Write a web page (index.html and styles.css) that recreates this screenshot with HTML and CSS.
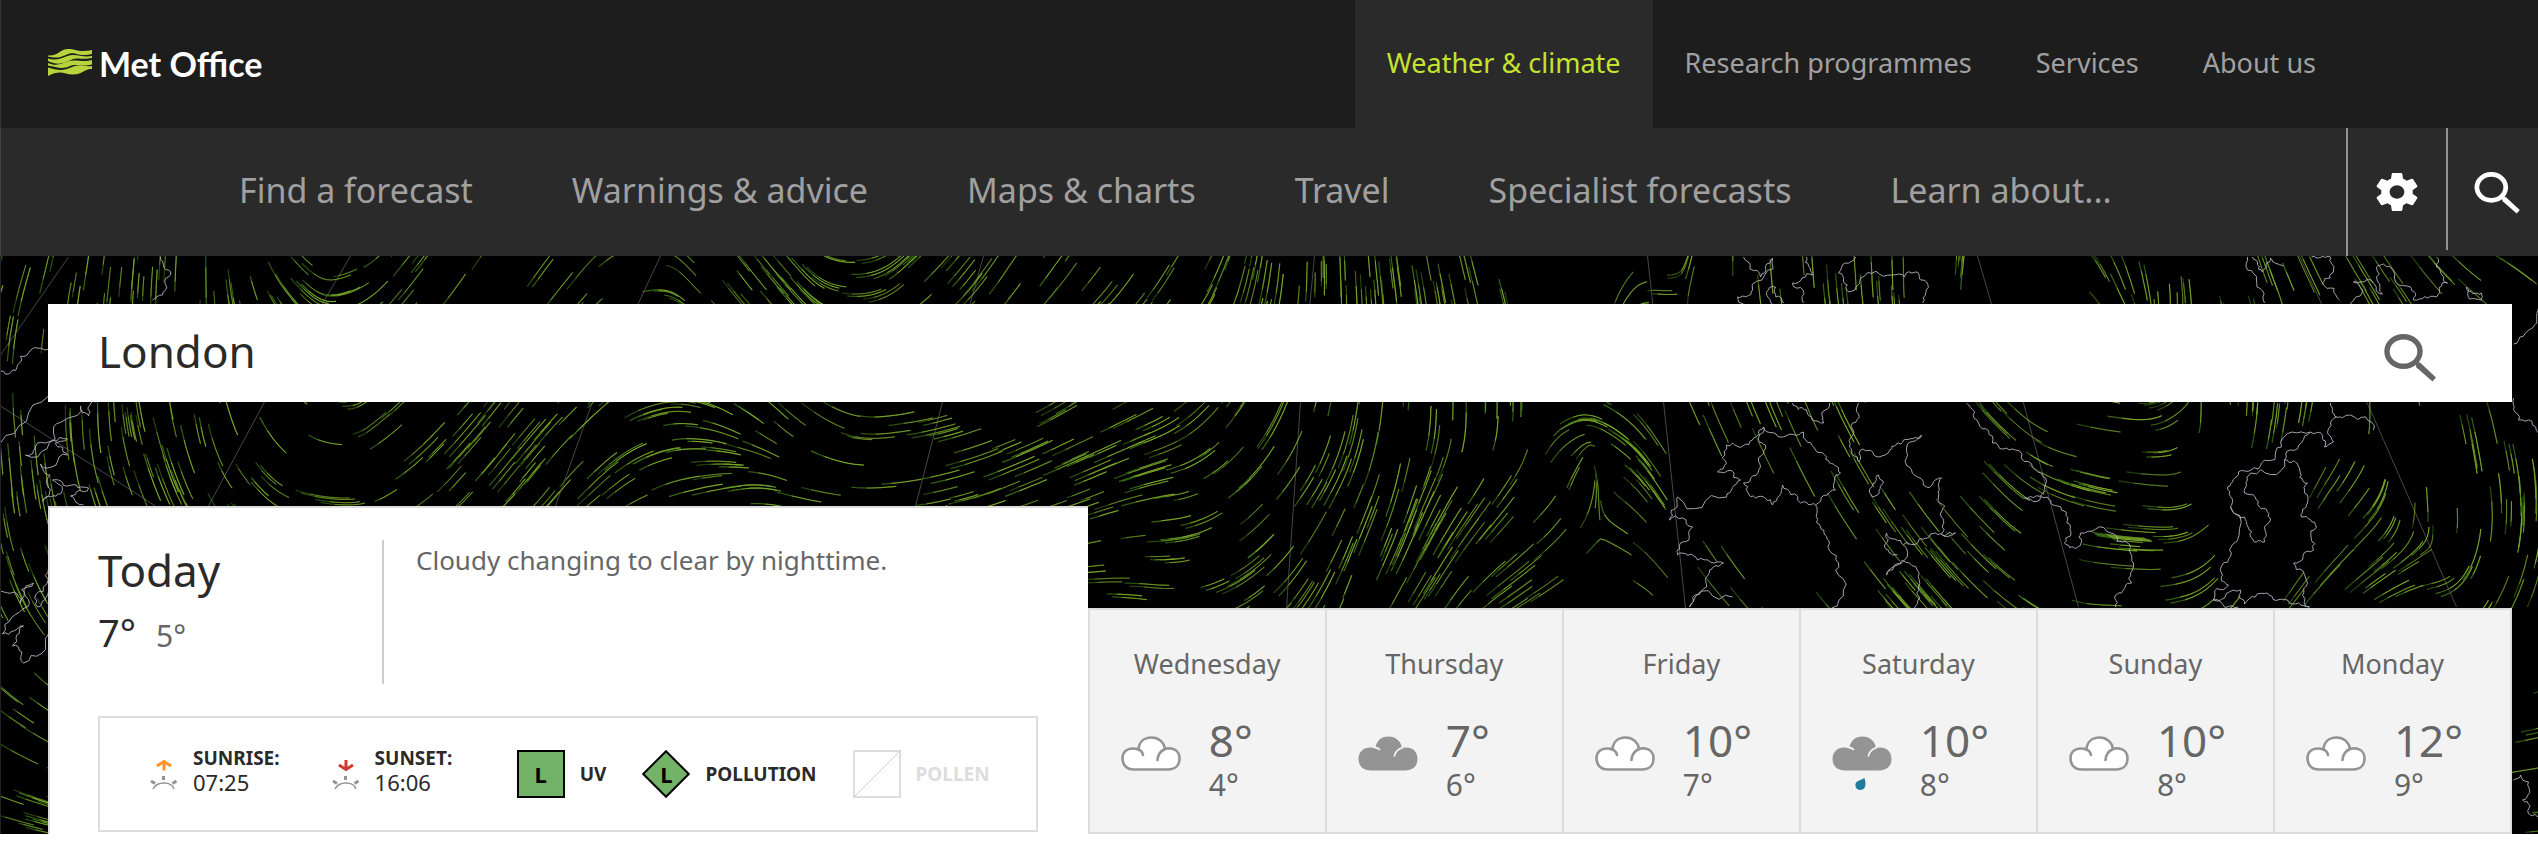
FILE: index.html
```html
<!DOCTYPE html>
<html lang="en">
<head>
<meta charset="utf-8">
<title>London weather - Met Office</title>
<link rel="stylesheet" href="styles.css">
</head>
<body>
<svg class="defs" aria-hidden="true">
  <symbol id="search" viewBox="0 0 52 48">
    <ellipse cx="19.500" cy="17.500" rx="16.500" ry="14.800" fill="none" stroke="currentColor" stroke-width="5.400"/>
    <path d="M31.500 30.500 33.500 28 36 28.500 52 43.500 48.500 47.500 32.500 33.500Z" fill="currentColor"/>
  </symbol>
  <symbol id="cloud" viewBox="0 0 60 56">
    <path d="M13 33.500C5 33.500 1.500 28 1.500 22.500 1.500 16 6 12.500 12 12.500Q15 12.500 17.500 13.500C18 6 23 1.500 30.500 1.500 37.500 1.500 43 6 44 13Q46 12.300 48 12.300C55 12.500 58.500 17 58.500 22.500 58.500 29 54.500 33.500 47 33.500Z" fill="#fff" stroke="#949494" stroke-width="2.600"/>
    <path d="M17 13.500Q21 14.500 22 19M44 13Q37 16 36.500 24" fill="none" stroke="#949494" stroke-width="2.600" stroke-linecap="round"/>
  </symbol>
  <symbol id="overcast" viewBox="0 0 60 56">
    <path d="M13 34.500C4 34.500 .5 28.500 .5 23 .5 16 5.500 11.500 12 11.500Q15 11.500 17.500 12.500C18 5 23 .5 30.500 .5 37.500 .5 43 5 44 12Q46 11.500 48 11.500C56 11.500 59.500 17 59.500 23 59.500 29.500 55.500 34.500 47 34.500Z" fill="#949494"/>
    <path d="M17 11.500Q20.500 12 22 14M45 11.300Q37 14 36.300 20.500" fill="none" stroke="#f3f3f3" stroke-width="1.800"/>
  </symbol>
  <symbol id="rain" viewBox="0 0 60 56">
    <use href="#overcast"/>
    <path d="M32.500 42Q34 47 33.300 50C32.500 53 30 54 28 54 24.500 53.500 23 51 23.500 48 24.500 44.500 28.500 44.500 32.500 42Z" fill="#1f7a9c"/>
  </symbol>
  <symbol id="sun" viewBox="0 0 32 32">
    <path d="M5 31Q8 25 16 25T26 31" fill="none" stroke="#949494" stroke-width="1.500"/>
    <path d="M15.500 18V22M3 23 7 25.500M28.500 23 24.500 25.500" stroke="#949494" stroke-width="3"/>
  </symbol>
</svg>

<header class="top">
  <a class="logo" href="#">
    <svg class="logo-mark" viewBox="0 0 44 28" aria-hidden="true">
      <path d="M0 6.500C11 7 12 0 20 0 29 0 30 4 44 1V5C31 8 28 3 22 4.500 15 6.500 11 10.500 0 7.500Z"/>
      <path d="M0 9.500C13 13 16 6 25 6 32 6 36 8.500 44 7V9C34 11 30 8 24 10.500 17 13.500 11 17.500 0 12Z"/>
      <path d="M0 14C11 19 17 11.500 25 11.500 33 11.500 37 13 44 11V15.500C33 18.500 28 14 21 17.500 14 20.500 8 18 0 16.500Z"/>
      <path d="M0 18.500C9 21.500 16 22 23 18.500 31 14.500 35 18 44 17V20C37 19 35 25.500 25 25.500 16 25.500 13 20 0 27Z"/>
    </svg>
    <span class="logo-text">Met Office</span>
  </a>
  <nav class="sections">
    <a class="section active" href="#">Weather &amp; climate</a>
    <a class="section" href="#">Research programmes</a>
    <a class="section" href="#">Services</a>
    <a class="section" href="#">About us</a>
  </nav>
</header>

<div class="bar">
  <nav class="menu">
    <a href="#">Find a forecast</a>
    <a href="#">Warnings &amp; advice</a>
    <a href="#">Maps &amp; charts</a>
    <a href="#">Travel</a>
    <a href="#">Specialist forecasts</a>
    <a href="#">Learn about...</a>
  </nav>
  <button class="tool" type="button" aria-label="Settings">
    <svg class="gear" viewBox="2 2 20 20" preserveAspectRatio="none" aria-hidden="true"><path fill="#fff" d="M19.430 12.980c.04-.32.070-.64.070-.98s-.03-.66-.07-.98l2.110-1.650c.19-.15.24-.42.120-.64l-2-3.460c-.12-.22-.39-.3-.61-.22l-2.490 1c-.52-.4-1.080-.73-1.690-.98l-.38-2.650C14.460 2.180 14.250 2 14 2h-4c-.25 0-.46.180-.49.420l-.38 2.650c-.61.250-1.170.590-1.690.98l-2.490-1c-.23-.09-.49 0-.61.220l-2 3.460c-.13.220-.07.490.120.640l2.110 1.650c-.04.320-.07.650-.07.980s.030.660.070.980l-2.110 1.650c-.19.150-.24.420-.12.640l2 3.460c.12.220.390.300.610.220l2.490-1c.52.400 1.080.730 1.690.980l.38 2.650c.03.240.240.420.490.420h4c.25 0 .46-.18.490-.42l.38-2.650c.61-.25 1.170-.59 1.690-.98l2.490 1c.23.090.490 0 .61-.22l2-3.460c.12-.22.070-.49-.12-.64l-2.110-1.650zM12 15.500c-1.930 0-3.500-1.570-3.500-3.500s1.570-3.500 3.500-3.500 3.500 1.570 3.500 3.500-1.570 3.500-3.500 3.500z"/></svg>
  </button>
  <button class="tool short" type="button" aria-label="Search the site">
    <svg class="glass" aria-hidden="true"><use href="#search"/></svg>
  </button>
</div>

<main class="hero">
  <svg class="wind" id="wind" viewBox="0 256 2538 578" preserveAspectRatio="xMidYMin slice" aria-hidden="true"></svg>

  <form class="search">
    <input class="search-input" type="text" value="London" aria-label="Location">
    <button class="search-button" type="button" aria-label="Search"><svg class="glass large" aria-hidden="true"><use href="#search"/></svg></button>
  </form>

  <div class="forecast">
    <section class="today">
      <div class="today-head">
        <div class="today-temps">
          <h1>Today</h1>
          <p class="now"><span class="now-high">7°</span><span class="now-low">5°</span></p>
        </div>
        <p class="summary">Cloudy changing to clear by nighttime.</p>
      </div>
      <div class="facts">
        <div class="group sun-group">
          <div class="fact sun-fact">
            <svg class="sun" viewBox="0 0 32 32" aria-hidden="true"><use href="#sun"/><path d="M16 12.500V3M9 8 16 3.500 23 8" fill="none" stroke="#ff9326" stroke-width="3"/></svg>
            <div class="fact-text"><strong>SUNRISE:</strong><span>07:25</span></div>
          </div>
          <div class="fact sun-fact">
            <svg class="sun" viewBox="0 0 32 32" aria-hidden="true"><use href="#sun"/><path d="M16 2V11.500M9 7 16 11.500 23 7" fill="none" stroke="#cf3a33" stroke-width="3"/></svg>
            <div class="fact-text"><strong>SUNSET:</strong><span>16:06</span></div>
          </div>
        </div>
        <div class="group">
          <div class="fact"><span class="badge square">L</span><strong>UV</strong></div>
          <div class="fact"><span class="badge"><svg class="diamond" viewBox="0 0 48 48" aria-hidden="true"><path d="M24 1.200 46.800 24 24 46.800 1.200 24Z" fill="#73b368" stroke="#000" stroke-width="2"/></svg><span class="badge-letter">L</span></span><strong>POLLUTION</strong></div>
          <div class="fact off"><svg class="empty" viewBox="0 0 48 48" aria-hidden="true"><path d="M1 1H47V47H1Z" fill="none" stroke="#ddd" stroke-width="2"/><path d="M0 48 48 0" stroke="#ccc"/></svg><strong>POLLEN</strong></div>
        </div>
      </div>
    </section>

    <section class="days">
      <a class="day" href="#"><h2>Wednesday</h2><div class="day-row"><svg class="weather" aria-hidden="true"><use href="#cloud"/></svg><div><p class="high">8°</p><p class="low">4°</p></div></div></a>
      <a class="day" href="#"><h2>Thursday</h2><div class="day-row"><svg class="weather" aria-hidden="true"><use href="#overcast"/></svg><div><p class="high">7°</p><p class="low">6°</p></div></div></a>
      <a class="day" href="#"><h2>Friday</h2><div class="day-row"><svg class="weather" aria-hidden="true"><use href="#cloud"/></svg><div><p class="high">10°</p><p class="low">7°</p></div></div></a>
      <a class="day" href="#"><h2>Saturday</h2><div class="day-row"><svg class="weather" aria-hidden="true"><use href="#rain"/></svg><div><p class="high">10°</p><p class="low">8°</p></div></div></a>
      <a class="day" href="#"><h2>Sunday</h2><div class="day-row"><svg class="weather" aria-hidden="true"><use href="#cloud"/></svg><div><p class="high">10°</p><p class="low">8°</p></div></div></a>
      <a class="day" href="#"><h2>Monday</h2><div class="day-row"><svg class="weather" aria-hidden="true"><use href="#cloud"/></svg><div><p class="high">12°</p><p class="low">9°</p></div></div></a>
    </section>
  </div>
</main>
<script src="wind.js"></script>
</body>
</html>
```
FILE: styles.css
```css
* { box-sizing: border-box; }
body {
  margin: 0;
  background: #fff;
  color: #2a2a2a;
  font-family: "Noto Sans", "Open Sans", sans-serif;
  font-size: 27px;
}
h1, h2, p { margin: 0; font-weight: 400; }
a { color: inherit; text-decoration: none; }
button { border: 0; padding: 0; background: none; color: inherit; }
svg { display: block; flex: none; }
.defs { display: none; }

.top {
  display: flex;
  justify-content: space-between;
  height: 128px;
  padding: 0 190px 0 47px;
  background: #1d1d1d;
  border-left: 1px solid #333;
}
.logo { display: flex; align-items: center; gap: 7px; height: 126px; }
.logo-mark { width: 44px; height: 28px; fill: #b9d33c; }
.logo-text { color: #fff; font-family: Lato, "Open Sans", sans-serif; font-size: 34px; font-weight: 700; }
.sections { display: flex; color: #a0a0a0; }
.section { display: flex; align-items: center; padding: 0 32px 4px; }
.active { background: #2a2a2a; color: #c4e230; }

.bar {
  display: flex;
  height: 128px;
  background: #2a2a2a;
  border-left: 1px solid #444;
  color: #a0a0a0;
}
.menu { flex: 1; display: flex; align-items: center; gap: 99px; padding: 0 0 4px 238px; font-size: 34px; white-space: nowrap; }
.tool {
  display: flex;
  align-items: center;
  justify-content: center;
  width: 100px;
  height: 128px;
  border-left: 2px solid #949494;
  color: #fff;
}
.short { width: 92px; height: 122px; justify-content: flex-start; padding: 8px 0 0 26px; }
.gear { width: 42px; height: 38px; }
.glass { width: 46px; height: 42px; }
.large { width: 52px; height: 48px; }

.hero {
  position: relative;
  padding: 48px 26px 0 47px;
  border-left: 1px solid #222;
  background: #000;
}
.wind { position: absolute; inset: 0; width: 100%; height: 100%; }
.search {
  position: relative;
  display: flex;
  align-items: center;
  height: 98px;
  padding: 0 76px 0 50px;
  background: #fff;
}
.search-input {
  flex: 1;
  min-width: 0;
  padding: 0 0 4px;
  border: 0;
  outline: 0;
  background: none;
  color: #2a2a2a;
  font: inherit;
  font-size: 44px;
}
.search-button { color: #666; padding-top: 10px; }

.forecast {
  position: relative;
  display: grid;
  grid-template-columns: 73fr 100fr;
  align-items: end;
  margin-top: 104px;
}
.today {
  padding: 32px 50px 2px 48px;
  background: #fff;
  border: solid #ddd;
  border-width: 2px 0 0 2px;
}
.today-head { display: flex; min-height: 144px; margin-bottom: 32px; }
.today-temps { width: 286px; border-right: 2px solid #ccc; }
.today-temps h1 { font-size: 44px; line-height: 60px; }
.now { display: flex; align-items: baseline; gap: 20px; line-height: 64px; }
.now-high { font-size: 38px; }
.now-low { font-size: 30px; color: #666; }
.summary { padding-left: 32px; font-size: 26px; line-height: 40px; color: #666; }
.facts {
  display: flex;
  justify-content: space-between;
  padding: 28px 46px 28px 48px;
  border: 2px solid #ddd;
  font-size: 19px;
}
.group { display: flex; align-items: center; gap: 36px; }
.sun-group { gap: 50px; }
.fact { display: flex; align-items: center; gap: 15px; }
.sun-fact { gap: 13px; }
.fact-text { display: flex; flex-direction: column; padding-bottom: 8px; line-height: 24px; }
.fact-text span { font-size: 22px; }
.sun { width: 32px; height: 32px; }
.badge {
  position: relative;
  display: flex;
  align-items: center;
  justify-content: center;
  width: 48px;
  height: 48px;
  color: #000;
  font-size: 22px;
  font-weight: 700;
}
.square { background: #73b368; border: 2px solid #000; }
.diamond { position: absolute; inset: 0; width: 48px; height: 48px; }
.badge-letter { position: relative; }
.empty { width: 48px; height: 48px; }
.off { color: #ddd; }

.days {
  display: grid;
  grid-template-columns: repeat(6, 1fr);
  background: #f3f3f3;
  border: solid #ddd;
  border-width: 2px 0 2px 2px;
  color: #666;
}
.day { padding: 34px 0 28px; border-right: 2px solid #ddd; }
.day h2 { margin-bottom: 30px; font-size: 27px; line-height: 40px; text-align: center; }
.day-row { display: flex; gap: 28px; padding-left: 31px; }
.weather { width: 60px; height: 56px; margin-top: 22px; }
.high { font-size: 44px; line-height: 52px; }
.low { font-size: 30px; line-height: 38px; }
```
FILE: wind.js
```js
// Draws the wind map behind the forecast: map grid, coastlines and wind streaks.
(function () {
  var svg = document.getElementById('wind');
  var NS = 'http://www.w3.org/2000/svg';
  var seed = 7;
  function rand() { seed = (seed * 16807) % 2147483647; return seed / 2147483647; }
  function path(d, stroke, width, opacity) {
    var p = document.createElementNS(NS, 'path');
    p.setAttribute('d', d);
    p.setAttribute('fill', 'none');
    p.setAttribute('stroke', stroke);
    p.setAttribute('stroke-width', width);
    p.setAttribute('opacity', opacity);
    svg.appendChild(p);
  }

  // Wind direction in degrees: one row per latitude, as x, angle pairs.
  var field = [
    [280, [0,71, 100,83, 200,89, 240,-80, 300,-45, 345,20, 390,51, 500,57, 580,50, 650,5, 683,-45, 717,-54, 800,-48, 850,0, 900,42, 1000,56, 1100,52, 1200,61, 1250,78, 1300,88, 1350,-87, 1400,-82, 1470,-76, 1540,-72, 1590,-80, 1620,60, 1655,0, 1700,80, 1750,-85, 1850,-86, 1950,88, 2000,70, 2035,45, 2055,-25, 2100,-60, 2160,-85, 2200,-82, 2250,-72, 2330,-62, 2420,-52, 2500,-32, 2538,-40]],
    [420, [0,-84, 50,-88, 100,-88, 150,-76, 200,-80, 250,-65, 290,-50, 340,-5, 365,38, 430,46, 500,52, 600,42, 655,15, 690,-8, 730,-28, 780,-42, 830,-28, 880,5, 940,15, 1050,28, 1150,26, 1220,50, 1280,65, 1320,76, 1370,82, 1440,88, 1530,88, 1565,25, 1600,-25, 1650,-55, 1700,-66, 1800,-66, 1900,-60, 1970,-50, 2020,-40, 2060,-15, 2130,-5, 2180,40, 2200,88, 2280,82, 2330,75, 2370,88, 2420,-80, 2500,-76, 2538,-68]],
    [490, [0,-86, 50,-80, 100,-72, 200,-65, 260,-45, 300,-15, 340,0, 380,30, 450,48, 550,52, 600,42, 680,15, 740,8, 780,-15, 830,-10, 880,4, 930,12, 1000,22, 1100,22, 1170,10, 1220,35, 1260,48, 1330,62, 1400,76, 1450,60, 1540,52, 1585,75, 1620,-40, 1650,-55, 1700,-64, 1800,-62, 1900,-57, 2000,-45, 2060,-20, 2110,-10, 2160,-5, 2200,40, 2230,65, 2280,75, 2330,55, 2365,55, 2400,88, 2440,-82, 2500,-84, 2538,-88]],
    [600, [0,-66, 48,-60, 300,-20, 800,0, 1088,0, 1150,-8, 1200,15, 1260,38, 1300,55, 1350,70, 1400,60, 1450,55, 1500,35, 1580,30, 1620,-20, 1660,-48, 1750,-50, 1850,-50, 1950,-48, 2050,-30, 2090,-5, 2140,0, 2180,15, 2220,50, 2260,60, 2330,45, 2380,30, 2430,12, 2480,60, 2538,70]],
    [700, [0,-38, 100,-32, 2400,10, 2538,15]],
    [834, [0,-14, 100,-10, 2400,5, 2538,5]]
  ];
  function inRow(row, x) {
    for (var i = 2; i < row.length - 2 && row[i] < x; i += 2) {}
    var t = Math.max(0, Math.min(1, (x - row[i - 2]) / (row[i] - row[i - 2])));
    var a = row[i - 1] * Math.PI / 90, b = row[i + 1] * Math.PI / 90;
    return [Math.cos(a) * (1 - t) + Math.cos(b) * t, Math.sin(a) * (1 - t) + Math.sin(b) * t];
  }
  function angle(x, y) {
    for (var i = 1; i < field.length - 1 && field[i][0] < y; i++) {}
    var t = Math.max(0, Math.min(1, (y - field[i - 1][0]) / (field[i][0] - field[i - 1][0])));
    var a = inRow(field[i - 1][1], x), b = inRow(field[i][1], x);
    return Math.atan2(a[1] * (1 - t) + b[1] * t, a[0] * (1 - t) + b[0] * t) / 2;
  }

  // Longitude lines.
  [[0,355,68,257], [0,406,155,506], [350,256,264,402,208,506], [660,256,592,402,555,506],
   [983,256,942,402,915,506], [1314,256,1300,402,1286,608], [1647,256,1663,402,1685,608],
   [1977,256,1991,304,2023,403,2078,607], [2299,256,2373,417,2456,607]
  ].forEach(function (l) { path('M' + l.join(' '), '#777', 1, 0.6); });

  // Streaks follow the field from a random start, fading towards the tail.
  for (var n = 0; n < 3800; n++) {
    var x = rand() * 2560 - 10, y = 240 + rand() * 600;
    var dense = Math.sin(x / 83 + y / 60) * 0.7 + Math.sin(x / 37 - y / 45) * 0.5 + (x > 1500 ? -0.4 : 0.2);
    var steps = 5 + Math.floor(rand() * 7);
    if (rand() * 2.2 > dense + 1.3) continue;
    var copies = rand() < 0.2 ? 2 : 1;
    for (var c = 0; c < copies; c++) {
      var px = x + c * 5, py = y + c * 3, heading = angle(px, py), points = [];
      for (var s = 0; s <= steps; s++) {
        points.push(px.toFixed(1) + ' ' + py.toFixed(1));
        var a = angle(px, py);
        if (Math.cos(a - heading) < 0) a += Math.PI;
        heading = a;
        px += Math.cos(a) * 5;
        py -= Math.sin(a) * 5;
      }
      var glow = 0.6 + rand() * 0.4;
      path('M' + points.join('L'), '#4c8c1c', 1.2, glow * 0.75);
      path('M' + points.slice(Math.floor(steps / 3)).join('L'), '#8fb52f', 1, glow * 0.85);
    }
  }

  // Coastlines, roughened between the listed points.
  function rough(a, b, out, depth) {
    var dx = b[0] - a[0], dy = b[1] - a[1];
    if (depth === 0 || dx * dx + dy * dy < 12) { out.push(b[0].toFixed(1) + ' ' + b[1].toFixed(1)); return; }
    var k = (rand() - 0.5) * 0.55;
    var m = [(a[0] + b[0]) / 2 - dy * k, (a[1] + b[1]) / 2 + dx * k];
    rough(a, m, out, depth - 1);
    rough(m, b, out, depth - 1);
  }
  [
    [1763,427,1752,440,1732,443,1726,463,1717,472,1740,480,1726,497,1677,497,1671,510,1669,520,1692,527,1680,543,1677,555,1697,560,1723,563,1709,570,1706,587,1689,607,1732,597],
    [1763,427,1783,437,1803,432,1815,450,1829,463,1840,473,1835,490,1815,505,1820,527,1829,543,1835,570,1831,608],
    [1763,427,1758,440,1765,445,1760,467,1743,483,1755,498,1772,505,1782,485,1800,503,1815,505],
    [1743,257,1760,277,1772,258,1752,290,1737,297,1743,304],
    [1772,304,1768,290,1775,287,1783,303],
    [1806,257,1812,275,1792,283,1803,303],
    [1855,257,1838,273,1846,290,1860,278,1892,275,1915,272,1926,282,1922,303],
    [1792,403,1806,410,1823,423,1829,403],
    [1858,403,1852,423,1849,447,1858,462,1860,450,1878,457,1889,450,1903,440,1921,435,1906,450,1909,467,1926,487,1941,478,1938,497,1941,517,1941,533,1955,533,1935,533,1918,540,1903,545,1892,570,1886,575,1909,563,1918,587,1914,608],
    [1903,545,1886,533,1884,545,1897,555],
    [1878,475,1883,483,1872,497,1871,487,1878,475],
    [1966,403,1978,423,1992,443,2015,450,2035,470,2044,487,2024,498,2047,497,2061,510,2070,527,2064,543,2076,548,2080,533,2110,533,2127,543,2133,563,2131,583,2121,593,2115,607],
    [2330,403,2336,417,2330,423,2333,442,2324,447,2322,435,2310,432,2281,447,2261,463,2238,472,2227,487,2230,507,2229,550,2221,573,2228,585,2213,600,2238,607],
    [2336,417,2350,415,2373,430],
    [2310,432,2290,450,2284,460,2299,468,2307,483,2307,503,2301,517,2316,527,2313,550,2293,563,2307,583,2309,607],
    [2284,460,2250,473,2244,493,2259,507,2270,520,2264,542,2250,537,2244,517,2230,507],
    [2213,600,2240,590,2244,604,2267,593,2287,600,2309,607],
    [2247,257,2256,280,2264,303],
    [2252,257,2262,272,2270,258,2283,266],
    [2311,257,2330,257,2333,270,2322,283,2339,300],
    [2350,304,2362,292,2353,282,2370,280,2382,294,2376,267,2390,267,2410,287,2413,300,2436,297,2447,283,2436,267,2436,257],
    [2466,287,2481,293,2481,300,2469,299,2466,287],
    [2538,304,2532,328,2513,344], [2513,398,2518,420,2538,433],
    [2513,780,2520,775,2528,782,2522,800,2530,815,2538,817],
    [160,257,170,275,162,295,152,300], [0,371,17,365,28,353,48,349], [48,396,0,443],
    [95,402,88,416,80,406,53,427,25,455,37,443,67,439,55,443,67,455,40,464,50,490,42,501,60,494,52,480,67,486,88,488,70,496,83,505],
    [0,591,20,603,33,583,27,607,2,634,23,626,12,646,23,663,48,634],
    [48,568,35,595,37,607,48,591]
  ].forEach(function (c) {
    var out = [c[0] + ' ' + c[1]];
    for (var i = 2; i < c.length; i += 2) rough([c[i - 2], c[i - 1]], [c[i], c[i + 1]], out, 3);
    path('M' + out.join('L'), '#b4b4bc', 1, 0.9);
  });
})();
```
